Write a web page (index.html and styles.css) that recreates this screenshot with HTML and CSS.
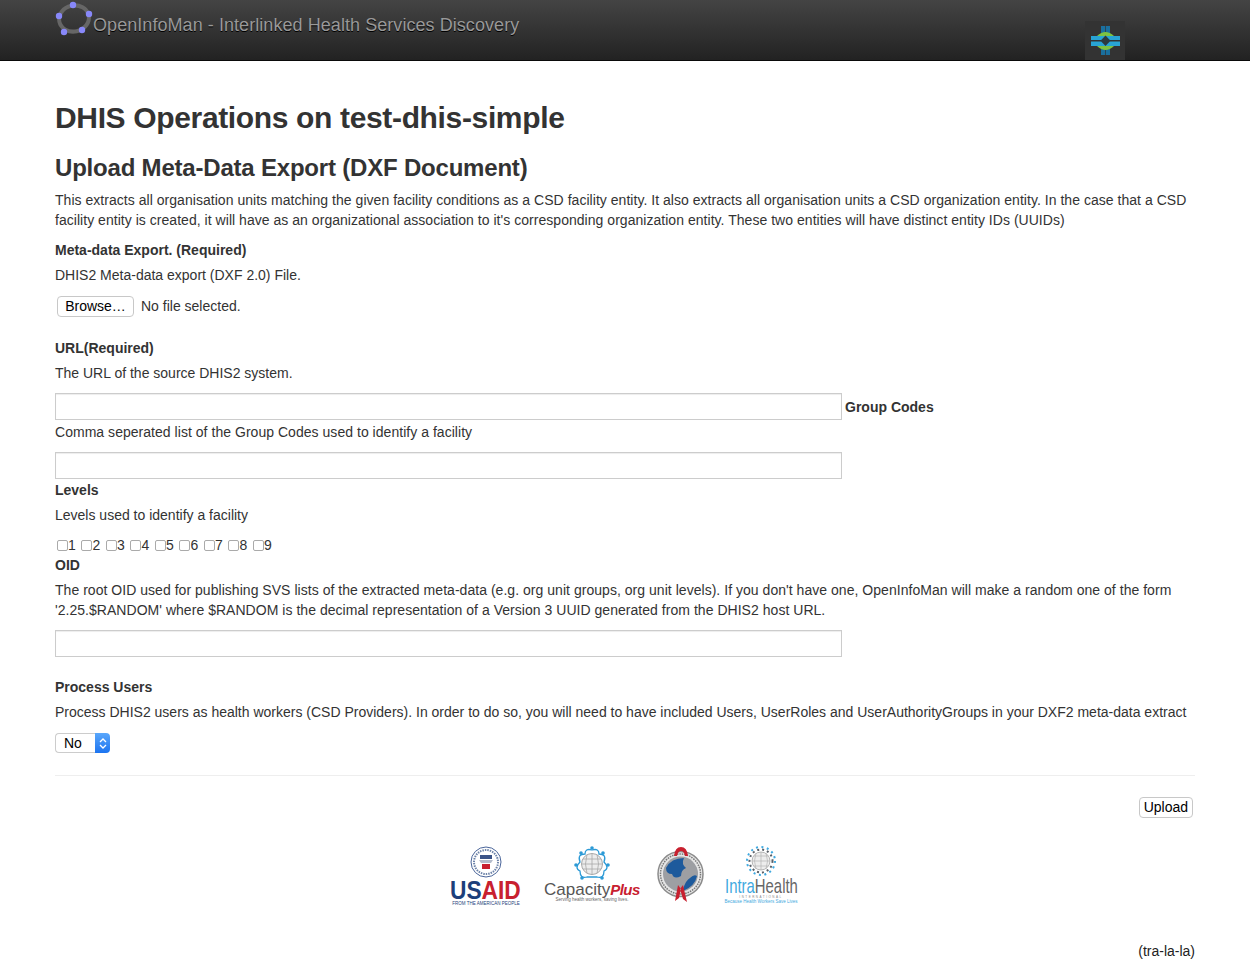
FILE: index.html
```html
<!DOCTYPE html>
<html lang="en">

<head>
    <meta charset="UTF-8">
    <title>OpenInfoMan - Interlinked Health Services Discovery</title>
    <link rel="stylesheet" href="styles.css">
</head>

<body>
    <div class="navbar">
        <svg class="brand-logo" width="38" height="38" viewBox="0 0 38 38">
            <ellipse cx="19" cy="18.500" rx="15" ry="13" transform="rotate(-12 19 18.500)" fill="none" stroke="#666" stroke-width="4"/>
            <circle cx="18" cy="5" r="3.200" fill="#8888fa"/>
            <circle cx="34" cy="14" r="3.200" fill="#8888fa"/>
            <circle cx="4" cy="16" r="3.200" fill="#8888fa"/>
            <circle cx="9" cy="32" r="3.200" fill="#8888fa"/>
            <circle cx="27" cy="30" r="3.200" fill="#8888fa"/>
        </svg>
        <a class="brand">OpenInfoMan - Interlinked Health Services Discovery</a>
        <div class="nav-logo">
            <svg width="30" height="30" viewBox="0 0 30 30">
                <rect x="11" y="0" width="4.300" height="29" fill="#1a6f9e"/>
                <rect x="16" y="0" width="4" height="29" fill="#1a6f9e"/>
                <path d="M7 10 Q15.500 2 24 10Z" fill="#7dc242"/>
                <path d="M7 20 Q15.500 28 24 20Z" fill="#7dc242"/>
                <rect x="1" y="10" width="29" height="4" fill="#28a4d4"/>
                <rect x="1" y="15.500" width="29" height="4.500" fill="#28a4d4"/>
                <path d="M15.500 9.500 L20.500 14.800 L15.500 20 L10.500 14.800Z" fill="#2b3a3f"/>
            </svg>
        </div>
    </div>

    <div class="container">
        <h1>DHIS Operations on test-dhis-simple</h1>
        <h2>Upload Meta-Data Export (DXF Document)</h2>
        <p class="wide-text">This extracts all organisation units matching the given facility conditions as a CSD facility entity. It also extracts all organisation units a CSD organization entity. In the case that a CSD facility entity is created, it will have as an organizational association to it's corresponding organization entity. These two entities will have distinct entity IDs (UUIDs)</p>

        <form>
            <label>Meta-data Export. (Required)</label>
            <p>DHIS2 Meta-data export (DXF 2.0) File.</p>
            <div class="file-row">
                <button type="button" class="btn browse">Browse…</button>
                <span>No file selected.</span>
            </div>

            <label>URL(Required)</label>
            <p>The URL of the source DHIS2 system.</p>
            <div class="input-row">
                <input type="text" class="text-input">
                <label class="inline-label">Group Codes</label>
            </div>
            <p class="after-input wide-text">Comma seperated list of the Group Codes used to identify a facility</p>
            <input type="text" class="text-input">

            <label class="levels-label">Levels</label>
            <p>Levels used to identify a facility</p>
            <div class="checks">
                <span class="check"><input type="checkbox">1</span>
                <span class="check"><input type="checkbox">2</span>
                <span class="check"><input type="checkbox">3</span>
                <span class="check"><input type="checkbox">4</span>
                <span class="check"><input type="checkbox">5</span>
                <span class="check"><input type="checkbox">6</span>
                <span class="check"><input type="checkbox">7</span>
                <span class="check"><input type="checkbox">8</span>
                <span class="check"><input type="checkbox">9</span>
            </div>

            <label>OID</label>
            <p class="wide-text">The root OID used for publishing SVS lists of the extracted meta-data (e.g. org unit groups, org unit levels). If you don't have one, OpenInfoMan will make a random one of the form '2.25.$RANDOM' where $RANDOM is the decimal representation of a Version 3 UUID generated from the DHIS2 host URL.</p>
            <input type="text" class="text-input">

            <label class="users-label">Process Users</label>
            <p>Process DHIS2 users as health workers (CSD Providers). In order to do so, you will need to have included Users, UserRoles and UserAuthorityGroups in your DXF2 meta-data extract</p>
            <div class="select">
                <span class="select-value">No</span>
                <span class="select-arrows">
                    <svg width="8" height="13" viewBox="0 0 8 13">
                        <path d="M1 5 L4 2 L7 5 M1 8 L4 11 L7 8" fill="none" stroke="#fff" stroke-width="1.300"/>
                    </svg>
                </span>
            </div>

            <div class="form-actions">
                <button type="button" class="btn">Upload</button>
            </div>
        </form>

        <div class="logos">
            <svg width="72" height="62" viewBox="0 0 72 62">
                <circle cx="36" cy="17" r="15" fill="#fff" stroke="#4a659a" stroke-width="1"/>
                <circle cx="36" cy="17" r="12" fill="none" stroke="#6d83a8" stroke-width="2" stroke-dasharray="1.500 1"/>
                <rect x="30" y="10" width="12" height="4" fill="#3b5488"/>
                <path d="M29 15 H43 L41 18 H31Z" fill="#b4bccb"/>
                <rect x="32" y="19" width="8" height="5" fill="#c8202f"/>
                <text transform="translate(0 54) scale(.875 1)" class="usaid-name"><tspan class="usaid-us">US</tspan>AID</text>
                <text x="36" y="60" class="usaid-sub">FROM THE AMERICAN PEOPLE</text>
            </svg>
            <svg class="logo-capacity" width="96" height="58" viewBox="0 0 96 58">
                <path d="M36 17 Q33 9 41 9 Q41 3 48 5 Q55 3 55 9 Q63 9 60 17 Q66 23 60 26 Q60 34 53 32 L43 32 Q36 34 36 26 Q30 23 36 17Z" fill="none" stroke="#2c9ad6" stroke-width="1.300"/>
                <g fill="#2c9ad6">
                    <circle cx="48" cy="3" r="1.800"/>
                    <circle cx="37" cy="8" r="1.800"/>
                    <circle cx="59" cy="8" r="1.800"/>
                    <circle cx="32" cy="20" r="1.800"/>
                    <circle cx="64" cy="20" r="1.800"/>
                    <circle cx="38" cy="33" r="1.800"/>
                    <circle cx="58" cy="33" r="1.800"/>
                </g>
                <circle cx="48" cy="19" r="10.500" fill="#ececec" stroke="#a8a8a8"/>
                <path d="M37.500 19 H58.500 M39 14 H57 M39 24 H57 M48 8.500 V29.500 M43 9.500 Q40 19 43 28.500 M53 9.500 Q56 19 53 28.500" fill="none" stroke="#a8a8a8" stroke-width=".8"/>
                <text x="0" y="50" class="cap-name">Capacity<tspan class="cap-plus">Plus</tspan></text>
                <text x="48" y="56" class="cap-sub">Serving health workers, saving lives.</text>
            </svg>
            <svg class="logo-ribbon" width="48" height="58" viewBox="0 0 48 58">
                <circle cx="23.500" cy="29" r="22.500" fill="#e6e6e6" stroke="#8c8c8c" stroke-width="1.500"/>
                <circle cx="23.500" cy="29" r="20" fill="none" stroke="#777" stroke-width="1.500" stroke-dasharray="1.500 1"/>
                <circle cx="23.500" cy="29" r="17.500" fill="#9d9fa3"/>
                <path d="M9 23 Q14 13 27 13 Q24 19 29 23 Q24 25 24 31 Q17 35 15 29 Q9 29 9 23Z M26 44 Q29 35 33 33 Q37 29 40 31 Q38 41 26 46Z" fill="#1d5a9c"/>
                <path d="M17 11 Q18 2 24 2 Q30 2 31 11 L28 11 Q27 6 24 6 Q21 6 20 11Z M21 40 L18 56 L22 53 L24 44Z M26 40 L30 57 L26 54 L23 44Z" fill="#c8202f"/>
            </svg>
            <svg class="logo-intra" width="76" height="60" viewBox="0 0 76 60">
                <circle cx="37" cy="16" r="9" fill="#ededed" stroke="#a5a5a5" stroke-width=".8"/>
                <path d="M28 16 H46 M30 11 H44 M30 21 H44 M37 7 V25 M32 8 Q29 16 32 24 M42 8 Q45 16 42 24" fill="none" stroke="#b5b5b5" stroke-width=".7"/>
                <circle cx="37" cy="16" r="11.500" fill="none" stroke="#5a6068" stroke-width="2" stroke-dasharray="2 3"/>
                <circle cx="37" cy="16" r="14" fill="none" stroke="#3fa9e0" stroke-width="2" stroke-dasharray="2 3.500"/>
                <text transform="translate(1 48) scale(.745 1)" class="intra-name">Intra<tspan class="intra-health">Health</tspan></text>
                <text x="37" y="52.500" class="intra-mid">INTERNATIONAL</text>
                <text x="37" y="58" class="intra-sub">Because Health Workers Save Lives</text>
            </svg>
        </div>

        <div class="footer-note">(tra-la-la)</div>
    </div>
</body>

</html>
```
FILE: styles.css
```css
body,
html {
    margin: 0;
}

body {
    font-family: "Liberation Sans", Arial, sans-serif;
    font-size: 14px;
    line-height: 20px;
    color: #333;
    background-color: #fff;
}

.navbar {
    display: flex;
    height: 60px;
    padding: 0 125px 0 55px;
    background: linear-gradient(#444, #222);
    border-bottom: 1px solid #0a0a0a;
}

.brand-logo {
    flex-shrink: 0;
}

.brand {
    margin-top: 11px;
    font-size: 18px;
    line-height: 28px;
    letter-spacing: 0.060px;
    color: #999;
    text-shadow: 0 1px 0 #000;
}

.nav-logo {
    display: flex;
    align-items: center;
    justify-content: center;
    align-self: flex-end;
    margin-left: auto;
    width: 40px;
    height: 39px;
    background-color: #333;
}

.container {
    margin: 0 55px;
}

h1 {
    margin: 0;
    padding-top: 37px;
    font-size: 30px;
    line-height: 40px;
    letter-spacing: -0.350px;
    color: #333;
}

h2 {
    margin: 15px 0 7px;
    font-size: 24px;
    line-height: 30px;
    letter-spacing: -0.200px;
    color: #333;
}

p {
    margin: 0 0 10px;
}

.wide-text {
    letter-spacing: 0.035px;
}

label {
    display: block;
    margin-bottom: 5px;
    font-weight: bold;
}

.btn {
    height: 21px;
    padding: 0 4px;
    font-family: inherit;
    font-size: 14px;
    line-height: 19px;
    color: #000;
    background-color: #fff;
    border: 1px solid #c8c8c8;
    border-radius: 4px;
}

.file-row {
    display: flex;
    align-items: center;
    gap: 7px;
    height: 22px;
    margin-bottom: 21px;
    padding-left: 2px;
}

.browse {
    width: 77px;
    padding: 0;
}

.input-row {
    display: flex;
    align-items: center;
}

.text-input {
    display: block;
    box-sizing: border-box;
    width: 787px;
    height: 27px;
    margin: 0;
    padding: 4px 6px;
    background-color: #fff;
    border: 1px solid #ccc;
    box-shadow: inset 0 1px 1px rgba(0, 0, 0, 0.075);
}

.inline-label {
    margin: 0 0 0 3px;
}

.after-input {
    margin-top: 2px;
}

.levels-label {
    margin-top: 1px;
}

.checks {
    display: flex;
    gap: 5.700px;
    height: 20px;
    padding-left: 2px;
}

.check {
    display: flex;
    align-items: center;
}

.check input {
    appearance: none;
    width: 11px;
    height: 11px;
    margin: 0;
    background-color: #fff;
    border: 1px solid #aaa;
    border-radius: 2px;
}

.users-label {
    margin-top: 20px;
}

.select {
    display: flex;
    width: 55px;
    height: 20px;
    margin-top: 11px;
}

.select-value {
    box-sizing: border-box;
    width: 40px;
    padding-left: 8px;
    line-height: 18px;
    color: #000;
    border: 1px solid #ccc;
    border-right: 0;
    border-radius: 4px 0 0 4px;
}

.select-arrows {
    display: flex;
    align-items: center;
    justify-content: center;
    width: 15px;
    background: linear-gradient(#5aa7fb, #1c74f0);
    border-radius: 0 4px 4px 0;
}

.form-actions {
    display: flex;
    justify-content: flex-end;
    margin-top: 22px;
    padding: 21px 2px 0 0;
    border-top: 1px solid #eee;
}

.logos {
    display: flex;
    align-items: flex-start;
    margin-top: 27px;
    padding-left: 395px;
}

.logo-capacity {
    margin-left: 22px;
}

.logo-ribbon {
    margin-left: 17px;
}

.logo-intra {
    margin-left: 19px;
}

.usaid-name {
    font-size: 26px;
    font-weight: bold;
    fill: #c8202f;
}

.usaid-us {
    fill: #1d3f7a;
}

.usaid-sub {
    font-size: 4.500px;
    text-anchor: middle;
    fill: #1d3f7a;
}

.cap-name {
    font-size: 17px;
    fill: #555;
}

.cap-plus {
    font-size: 15px;
    font-weight: bold;
    font-style: italic;
    letter-spacing: -0.500px;
    fill: #c8202f;
}

.cap-sub {
    font-size: 4.500px;
    text-anchor: middle;
    fill: #666;
}

.intra-name {
    font-size: 20px;
    fill: #3fa9e0;
}

.intra-health {
    fill: #666;
}

.intra-mid {
    font-size: 3px;
    text-anchor: middle;
    letter-spacing: 1.500px;
    fill: #888;
}

.intra-sub {
    font-size: 4.500px;
    text-anchor: middle;
    fill: #3fa9e0;
}

.footer-note {
    margin-top: 34px;
    text-align: right;
    color: #222;
}
```
